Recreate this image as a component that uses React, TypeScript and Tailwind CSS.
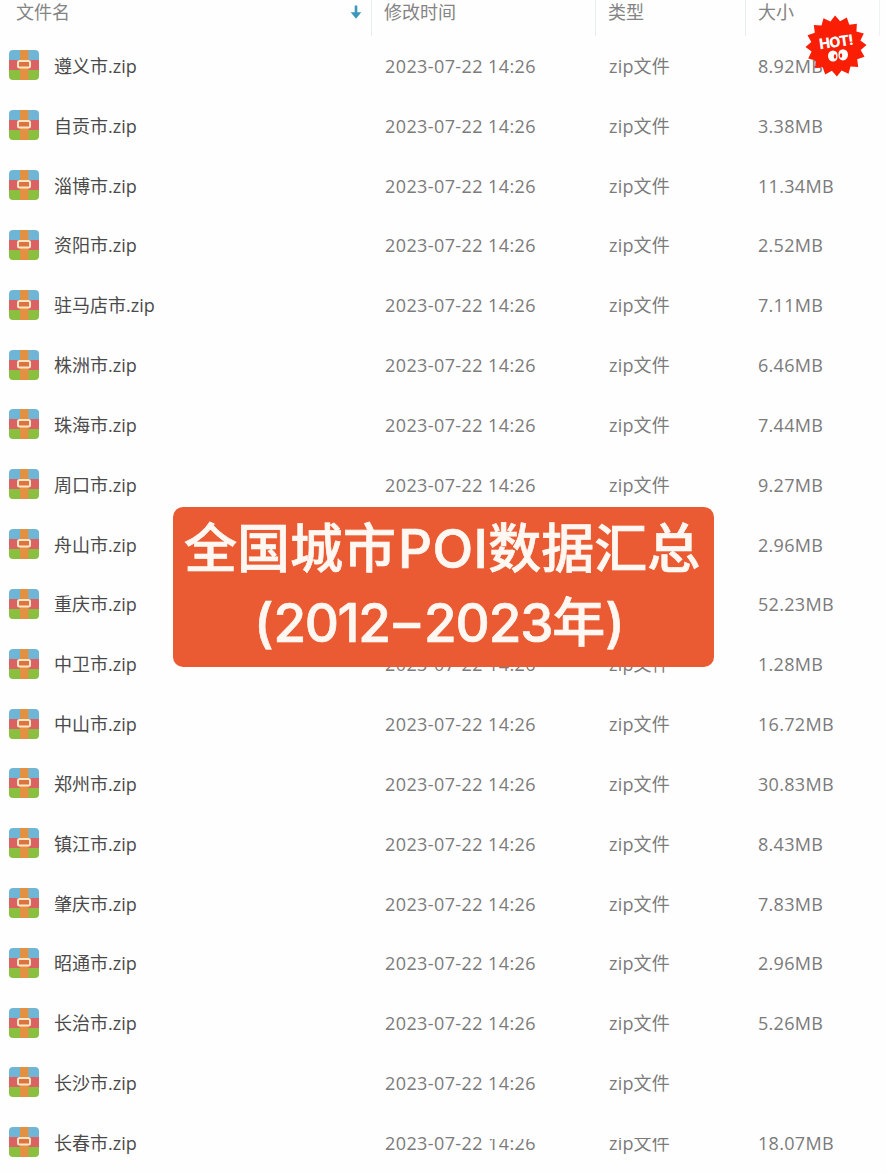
const files = [
  { name: "遵义市.zip", size: "8.92MB" },
  { name: "自贡市.zip", size: "3.38MB" },
  { name: "淄博市.zip", size: "11.34MB" },
  { name: "资阳市.zip", size: "2.52MB" },
  { name: "驻马店市.zip", size: "7.11MB" },
  { name: "株洲市.zip", size: "6.46MB" },
  { name: "珠海市.zip", size: "7.44MB" },
  { name: "周口市.zip", size: "9.27MB" },
  { name: "舟山市.zip", size: "2.96MB", covered: true },
  { name: "重庆市.zip", size: "52.23MB", covered: true },
  { name: "中卫市.zip", size: "1.28MB" },
  { name: "中山市.zip", size: "16.72MB" },
  { name: "郑州市.zip", size: "30.83MB" },
  { name: "镇江市.zip", size: "8.43MB" },
  { name: "肇庆市.zip", size: "7.83MB" },
  { name: "昭通市.zip", size: "2.96MB" },
  { name: "长治市.zip", size: "5.26MB" },
  { name: "长沙市.zip", size: "" },
  { name: "长春市.zip", size: "18.07MB" },
];

const ZipIcon = () => (
  <svg viewBox="0 0 32 32" className="ml-2 size-8 shrink-0">
    <defs>
      <clipPath id="zip">
        <rect x="1" y="1" width="30" height="30" rx="4" />
      </clipPath>
    </defs>
    <g clipPath="url(#zip)">
      <rect width="32" height="12" fill="#6fb5d6" />
      <rect y="11" width="32" height="10" fill="#db6263" />
      <rect y="21" width="32" height="11" fill="#8bbf40" />
      <rect x="12" width="8.5" height="32" fill="#e29142" />
    </g>
    <rect x="10" y="12" width="12" height="6.5" rx="1.5" fill="#dc7442" stroke="#ffe5c4" strokeWidth="2" />
  </svg>
);

// 16 pointed star
const star = Array.from({ length: 32 }, (_, i) => {
  const r = i % 2 ? 25 : 30.5;
  const a = (i * Math.PI) / 16 - Math.PI / 2 - 0.03;
  return `${(31 + r * Math.cos(a)).toFixed(1)},${(31 + r * Math.sin(a)).toFixed(1)}`;
}).join(" ");

const HotBadge = () => (
  <svg viewBox="0 0 62 62" className="absolute left-[805px] top-[15px] size-[62px]">
    <polygon points={star} fill="#fa1e05" />
    <text
      x="31.5"
      y="32"
      textAnchor="middle"
      transform="rotate(-8 31 28)"
      fill="#fff"
      className="font-['Inter'] text-[14.5px] font-extrabold"
      textLength="34.5"
    >
      HOT!
    </text>
    <g fill="#fff">
      <ellipse cx="28" cy="41" rx="5" ry="5.6" />
      <ellipse cx="38" cy="39.8" rx="5" ry="5.6" />
    </g>
    <g fill="#fa1e05">
      <ellipse cx="30" cy="41.5" rx="1.2" ry="2.2" />
      <ellipse cx="36" cy="40.5" rx="1.2" ry="2.2" />
      <rect x="32.6" y="35" width="0.8" height="11" />
    </g>
  </svg>
);

const App = () => {
  return (
    <div className="relative h-[1173px] w-[887px] overflow-hidden bg-[#fefefe] font-['Open_Sans','Noto_Sans_CJK_SC',sans-serif] text-[18px] leading-6 text-[#7b7b7b]">
      <div className="flex h-[35.5px] text-[#848484]">
        <div className="flex w-[372px] justify-between border-r border-[#e8edf0] pl-4 pr-2">
          <span>文件名</span>
          <svg viewBox="0 0 14 16" className="mt-1 h-4 w-3.5" fill="#3b98bd">
            <path d="M5.7 1.5h2.6v6.7h4L7 14.8 1.7 8.2h4z" />
          </svg>
        </div>
        <div className="w-[224px] border-r border-[#e8edf0] pl-3">修改时间</div>
        <div className="w-[150px] border-r border-[#e8edf0] pl-3">类型</div>
        <div className="w-[134px] border-r border-[#f0f3f4] pl-3">大小</div>
      </div>

      {files.map((file, index) => {
        const last = index === files.length - 1;
        return (
          <div className="flex h-[59.83px] items-center" key={index}>
            <div className="flex w-[385px] items-center text-[#4a4a4a]">
              <ZipIcon />
              <span className="ml-3.5 pt-px">{file.name}</span>
            </div>
            <div className="relative w-[224px] pt-px tracking-[0.4px]">
              {!file.covered && "2023-07-22 14:26"}
              {last && <span className="absolute left-[103px] top-0 h-[9px] w-[52px] bg-[#fefefe]" />}
            </div>
            <div className="relative w-[149px] pt-px tracking-[0.2px]">
              {!file.covered && "zip文件"}
              {last && <span className="absolute left-0 top-0 h-[8px] w-[66px] bg-[#fefefe]" />}
            </div>
            <div className="pt-px tracking-[0.3px]">{file.size}</div>
          </div>
        );
      })}

      <div className="absolute left-[173px] top-[507px] h-[160px] w-[541px] rounded-[10px] bg-[#ea5b34] font-['Inter','Noto_Sans_CJK_SC',sans-serif] text-[53px] font-medium leading-[74px] text-[#fff8f2] [-webkit-text-stroke:0.7px_#fff8f2]">
        <div className="whitespace-nowrap pl-[11px] pt-[5px]">
          全国城市<span className="ml-0.5 tracking-[0.4px]">POI</span>数据汇总
        </div>
        <div className="flex whitespace-nowrap pl-[81px]">
          <span>(</span>
          <span className="tracking-[-1.4px]">2012</span>
          <span className="mx-[4px]">–</span>
          <span className="tracking-[-1.1px]">2023</span>
          <span>年</span>
          <span>)</span>
        </div>
      </div>

      <HotBadge />
    </div>
  );
};

export default App;
